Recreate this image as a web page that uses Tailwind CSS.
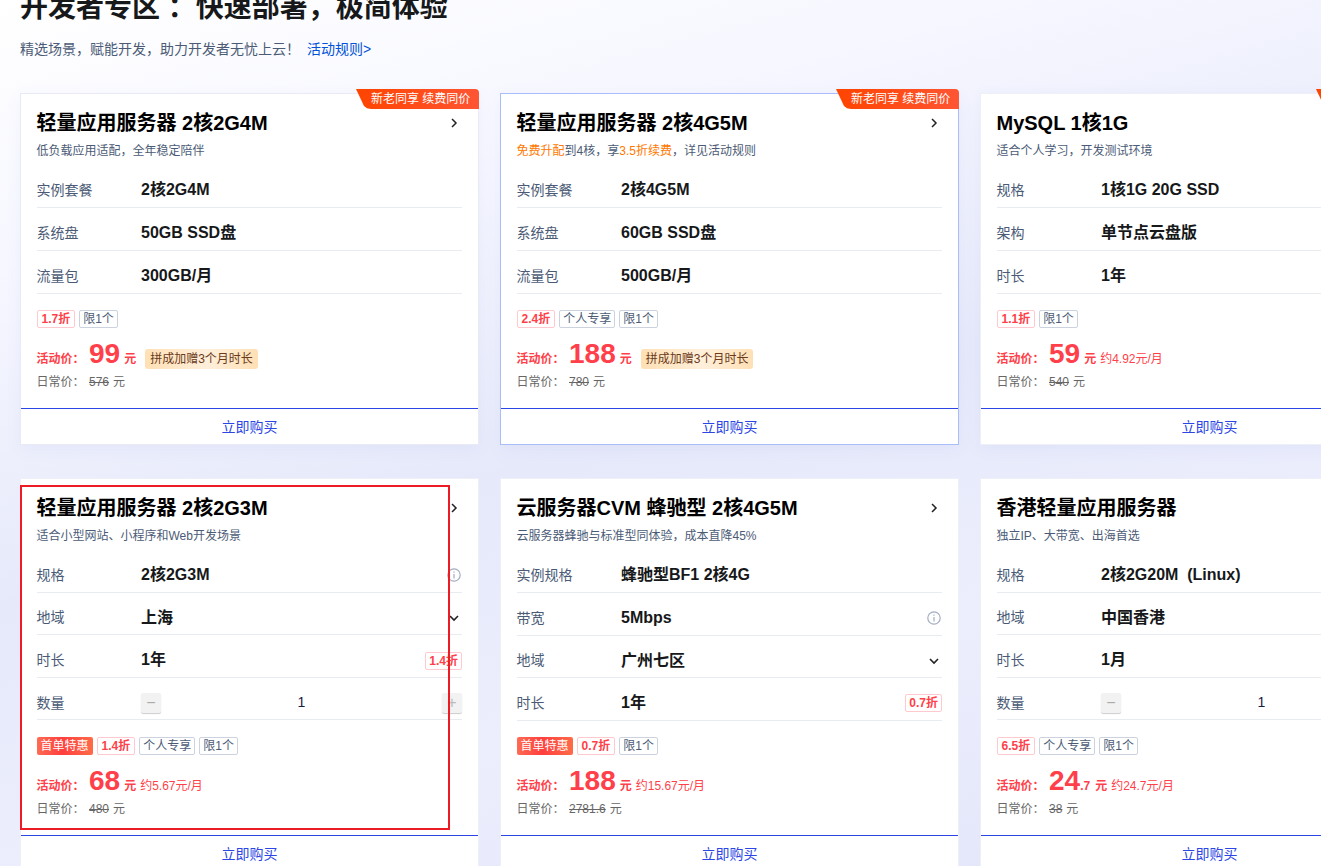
<!DOCTYPE html>
<html lang="zh">
<head>
<meta charset="utf-8">
<script src="https://cdn.jsdelivr.net/npm/@tailwindcss/browser@4"></script>
</head>
<body class="overflow-hidden">
<div class="relative w-[1321px] h-[866px] overflow-hidden pl-[20px] font-['Liberation_Sans','Noto_Sans_CJK_SC',sans-serif] bg-[linear-gradient(165deg,#ffffff_0%,#f6f7ff_22%,#e6e9fa_50%,#eceefd_72%,#e2e5f9_100%)]">
  <h1 class="-mt-[12px] h-[40px] text-[28px] leading-[40px] font-bold text-[#16181a] whitespace-pre">开发者专区 ：快速部署，极简体验</h1>
  <p class="mt-[11px] h-[20px] text-[14px] leading-[20px] text-[#4b5b76]">精选场景，赋能开发，助力开发者无忧上云！<a class="ml-[7px] text-[#0052d9]">活动规则&gt;</a></p>
  <div class="mt-[34px] grid grid-cols-[459px_459px_459px] gap-x-[21px] gap-y-[33px]">

    <!-- Card 1 -->
    <section class="relative flex h-[352px] flex-col border border-[#e8ebf5] bg-white shadow-[0_4px_16px_rgba(80,100,200,0.06)]">
      <div class="absolute right-[-1px] top-[-5px] h-[20px] w-[123px] rounded-tr-[4px] bg-[linear-gradient(90deg,#ff4400,#ff5533)] pl-[15px] text-[12px] leading-[20px] text-white [clip-path:polygon(0_0,100%_0,100%_100%,15px_100%,11px_96%,8px_85%)]">新老同享 续费同价</div>
      <div class="flex-1 pl-[15.5px] pr-[16px] pt-[15px]">
        <div class="flex h-[28px] items-center justify-between">
          <h2 class="text-[20px] leading-[28px] font-bold text-black">轻量应用服务器 2核2G4M</h2>
          <svg class="mr-[4px]" width="8" height="10" viewBox="0 0 8 10" fill="none" stroke="#222" stroke-width="1.5"><path d="M2 1l4 4-4 4"/></svg>
        </div>
        <p class="mt-[4px] h-[20px] text-[12px] leading-[20px] text-[#4b5b76]">低负载应用适配，全年稳定陪伴</p>
        <div class="mt-[4px] flex h-[43px] items-center border-b border-[#e8ebf0] pt-[8px]"><span class="w-[104.5px] text-[14px] text-[#4b5b76]">实例套餐</span><span class="text-[16px] font-bold text-[#16181a]">2核2G4M</span></div>
        <div class="flex h-[43px] items-center border-b border-[#e8ebf0] pt-[8px]"><span class="w-[104.5px] text-[14px] text-[#4b5b76]">系统盘</span><span class="text-[16px] font-bold text-[#16181a]">50GB SSD盘</span></div>
        <div class="flex h-[43px] items-center border-b border-[#e8ebf0] pt-[8px]"><span class="w-[104.5px] text-[14px] text-[#4b5b76]">流量包</span><span class="text-[16px] font-bold text-[#16181a]">300GB/月</span></div>
        <div class="mt-[16px] flex h-[18px] gap-[4px] text-[12px] leading-[16px]"><span class="rounded-[2px] border border-[#ffc9cf] px-[4px] font-bold text-[#ff3f4a]">1.7折</span><span class="rounded-[2px] border border-[#ccd3de] px-[3px] text-[#4b5b76]">限1个</span></div>
        <div class="mt-[8px] flex h-[36px] items-baseline text-[12px] font-bold text-[#ff3f4a]"><span class="w-[52.5px]">活动价：</span><span class="text-[28px] leading-[36px]">99</span><span class="ml-[4px]">元</span><span class="ml-[9px] h-[20px] rounded-[3px] bg-[linear-gradient(90deg,#ffe0b5,#ffefdb_55%,#ffe0b5)] px-[5px] text-[12px] leading-[20px] font-normal text-[#6b3a1a]">拼成加赠3个月时长</span></div>
        <div class="flex h-[20px] items-center text-[12px] text-[#666]"><span class="w-[52.5px]">日常价：</span><s>576</s><span class="ml-[4px]">元</span></div>
      </div>
      <button class="h-[36px] shrink-0 border-t border-[#2b46e5] pt-[2px] text-[14px] text-[#2b46e5]">立即购买</button>
    </section>

    <!-- Card 2 -->
    <section class="relative flex h-[352px] flex-col border border-[#a9bdfb] bg-white shadow-[0_4px_16px_rgba(80,100,200,0.06)]">
      <div class="absolute right-[-1px] top-[-5px] h-[20px] w-[123px] rounded-tr-[4px] bg-[linear-gradient(90deg,#ff4400,#ff5533)] pl-[15px] text-[12px] leading-[20px] text-white [clip-path:polygon(0_0,100%_0,100%_100%,15px_100%,11px_96%,8px_85%)]">新老同享 续费同价</div>
      <div class="flex-1 pl-[15.5px] pr-[16px] pt-[15px]">
        <div class="flex h-[28px] items-center justify-between">
          <h2 class="text-[20px] leading-[28px] font-bold text-black">轻量应用服务器 2核4G5M</h2>
          <svg class="mr-[4px]" width="8" height="10" viewBox="0 0 8 10" fill="none" stroke="#222" stroke-width="1.5"><path d="M2 1l4 4-4 4"/></svg>
        </div>
        <p class="mt-[4px] h-[20px] text-[12px] leading-[20px] text-[#4b5b76]"><span class="text-[#ff7800]">免费升配</span>到4核，享<span class="text-[#ff7800]">3.5折续费</span>，详见活动规则</p>
        <div class="mt-[4px] flex h-[43px] items-center border-b border-[#e8ebf0] pt-[8px]"><span class="w-[104.5px] text-[14px] text-[#4b5b76]">实例套餐</span><span class="text-[16px] font-bold text-[#16181a]">2核4G5M</span></div>
        <div class="flex h-[43px] items-center border-b border-[#e8ebf0] pt-[8px]"><span class="w-[104.5px] text-[14px] text-[#4b5b76]">系统盘</span><span class="text-[16px] font-bold text-[#16181a]">60GB SSD盘</span></div>
        <div class="flex h-[43px] items-center border-b border-[#e8ebf0] pt-[8px]"><span class="w-[104.5px] text-[14px] text-[#4b5b76]">流量包</span><span class="text-[16px] font-bold text-[#16181a]">500GB/月</span></div>
        <div class="mt-[16px] flex h-[18px] gap-[4px] text-[12px] leading-[16px]"><span class="rounded-[2px] border border-[#ffc9cf] px-[4px] font-bold text-[#ff3f4a]">2.4折</span><span class="rounded-[2px] border border-[#ccd3de] px-[3px] text-[#4b5b76]">个人专享</span><span class="rounded-[2px] border border-[#ccd3de] px-[3px] text-[#4b5b76]">限1个</span></div>
        <div class="mt-[8px] flex h-[36px] items-baseline text-[12px] font-bold text-[#ff3f4a]"><span class="w-[52.5px]">活动价：</span><span class="text-[28px] leading-[36px]">188</span><span class="ml-[4px]">元</span><span class="ml-[9px] h-[20px] rounded-[3px] bg-[linear-gradient(90deg,#ffe0b5,#ffefdb_55%,#ffe0b5)] px-[5px] text-[12px] leading-[20px] font-normal text-[#6b3a1a]">拼成加赠3个月时长</span></div>
        <div class="flex h-[20px] items-center text-[12px] text-[#666]"><span class="w-[52.5px]">日常价：</span><s>780</s><span class="ml-[4px]">元</span></div>
      </div>
      <button class="h-[36px] shrink-0 border-t border-[#2b46e5] pt-[2px] text-[14px] text-[#2b46e5]">立即购买</button>
    </section>

    <!-- Card 3 -->
    <section class="relative flex h-[352px] flex-col border border-[#eef0f8] bg-white shadow-[0_4px_16px_rgba(80,100,200,0.06)]">
      <div class="absolute right-[-1px] top-[-5px] h-[20px] w-[123px] rounded-tr-[4px] bg-[linear-gradient(90deg,#ff4400,#ff5533)] pl-[15px] text-[12px] leading-[20px] text-white [clip-path:polygon(0_0,100%_0,100%_100%,15px_100%,11px_96%,8px_85%)]">新老同享 续费同价</div>
      <div class="flex-1 pl-[15.5px] pr-[16px] pt-[15px]">
        <div class="flex h-[28px] items-center justify-between">
          <h2 class="text-[20px] leading-[28px] font-bold text-black">MySQL 1核1G</h2>
          <svg class="mr-[4px]" width="8" height="10" viewBox="0 0 8 10" fill="none" stroke="#222" stroke-width="1.5"><path d="M2 1l4 4-4 4"/></svg>
        </div>
        <p class="mt-[4px] h-[20px] text-[12px] leading-[20px] text-[#4b5b76]">适合个人学习，开发测试环境</p>
        <div class="mt-[4px] flex h-[43px] items-center border-b border-[#e8ebf0] pt-[8px]"><span class="w-[104.5px] text-[14px] text-[#4b5b76]">规格</span><span class="text-[16px] font-bold text-[#16181a]">1核1G 20G SSD</span></div>
        <div class="flex h-[43px] items-center border-b border-[#e8ebf0] pt-[8px]"><span class="w-[104.5px] text-[14px] text-[#4b5b76]">架构</span><span class="text-[16px] font-bold text-[#16181a]">单节点云盘版</span></div>
        <div class="flex h-[43px] items-center border-b border-[#e8ebf0] pt-[8px]"><span class="w-[104.5px] text-[14px] text-[#4b5b76]">时长</span><span class="text-[16px] font-bold text-[#16181a]">1年</span></div>
        <div class="mt-[16px] flex h-[18px] gap-[4px] text-[12px] leading-[16px]"><span class="rounded-[2px] border border-[#ffc9cf] px-[4px] font-bold text-[#ff3f4a]">1.1折</span><span class="rounded-[2px] border border-[#ccd3de] px-[3px] text-[#4b5b76]">限1个</span></div>
        <div class="mt-[8px] flex h-[36px] items-baseline text-[12px] font-bold text-[#ff3f4a]"><span class="w-[52.5px]">活动价：</span><span class="text-[28px] leading-[36px]">59</span><span class="ml-[4px]">元</span><span class="ml-[4px] font-normal">约4.92元/月</span></div>
        <div class="flex h-[20px] items-center text-[12px] text-[#666]"><span class="w-[52.5px]">日常价：</span><s>540</s><span class="ml-[4px]">元</span></div>
      </div>
      <button class="h-[36px] shrink-0 border-t border-[#2b46e5] pt-[2px] text-[14px] text-[#2b46e5]">立即购买</button>
    </section>

    <!-- Card 4 -->
    <section class="relative flex h-[394px] flex-col border border-[#eef0f8] bg-white">
      <div class="flex-1 pl-[15.5px] pr-[16px] pt-[15px]">
        <div class="flex h-[28px] items-center justify-between">
          <h2 class="text-[20px] leading-[28px] font-bold text-black">轻量应用服务器 2核2G3M</h2>
          <svg class="mr-[4px]" width="8" height="10" viewBox="0 0 8 10" fill="none" stroke="#222" stroke-width="1.5"><path d="M2 1l4 4-4 4"/></svg>
        </div>
        <p class="mt-[4px] h-[20px] text-[12px] leading-[20px] text-[#4b5b76]">适合小型网站、小程序和Web开发场景</p>
        <div class="mt-[4px] flex h-[43px] items-center justify-between border-b border-[#e8ebf0] pt-[8px]"><div class="flex items-center"><span class="w-[104.5px] text-[14px] text-[#4b5b76]">规格</span><span class="text-[16px] font-bold text-[#16181a]">2核2G3M</span></div><svg class="mr-[1px]" width="14" height="14" viewBox="0 0 14 14" fill="none" stroke="#a3adc0" stroke-width="1.2"><circle cx="7" cy="7" r="6.2"/><path d="M7 6v4.5M7 3.4v1.4"/></svg></div>
        <div class="flex h-[42px] items-center justify-between border-b border-[#e8ebf0] pt-[8px]"><div class="flex items-center"><span class="w-[104.5px] text-[14px] text-[#4b5b76]">地域</span><span class="text-[16px] font-bold text-[#16181a]">上海</span></div><svg class="mr-[3px]" width="10" height="8" viewBox="0 0 10 8" fill="none" stroke="#222" stroke-width="1.6"><path d="M1 2l4 4 4-4"/></svg></div>
        <div class="flex h-[43px] items-center justify-between border-b border-[#e8ebf0] pt-[8px]"><div class="flex items-center"><span class="w-[104.5px] text-[14px] text-[#4b5b76]">时长</span><span class="text-[16px] font-bold text-[#16181a]">1年</span></div><span class="mt-[2px] h-[18px] rounded-[2px] border border-[#ffc9cf] px-[3px] text-[12px] leading-[16px] font-bold text-[#ff3f4a]">1.4折</span></div>
        <div class="flex h-[42px] items-center border-b border-[#e8ebf0] pt-[8px]"><span class="mt-[2px] w-[104.5px] text-[14px] text-[#4b5b76]">数量</span><span class="flex h-[20px] w-[20px] items-center justify-center rounded-[2px] bg-[#f2f2f2] text-[16px] leading-none text-[#aaa] shadow-[0_1px_1px_rgba(0,0,0,0.2)]">−</span><span class="flex-1 text-center text-[14px] text-[#16213f]">1</span><span class="flex h-[20px] w-[20px] items-center justify-center rounded-[2px] bg-[#f2f2f2] text-[16px] leading-none text-[#bbb] shadow-[0_1px_1px_rgba(0,0,0,0.2)]">+</span></div>
        <div class="mt-[17px] flex h-[18px] gap-[4px] text-[12px] leading-[16px]"><span class="rounded-[2px] bg-[linear-gradient(90deg,#ff6b52,#ff3f3f_45%,#ff6b47)] px-[4px] leading-[18px] text-white">首单特惠</span><span class="rounded-[2px] border border-[#ffc9cf] px-[4px] font-bold text-[#ff3f4a]">1.4折</span><span class="rounded-[2px] border border-[#ccd3de] px-[3px] text-[#4b5b76]">个人专享</span><span class="rounded-[2px] border border-[#ccd3de] px-[3px] text-[#4b5b76]">限1个</span></div>
        <div class="mt-[8px] flex h-[36px] items-baseline text-[12px] font-bold text-[#ff3f4a]"><span class="w-[52.5px]">活动价：</span><span class="text-[28px] leading-[36px]">68</span><span class="ml-[4px]">元</span><span class="ml-[4px] font-normal">约5.67元/月</span></div>
        <div class="flex h-[20px] items-center text-[12px] text-[#666]"><span class="w-[52.5px]">日常价：</span><s>480</s><span class="ml-[4px]">元</span></div>
      </div>
      <button class="h-[36px] shrink-0 border-t border-[#2b46e5] pt-[2px] text-[14px] text-[#2b46e5]">立即购买</button>
    </section>

    <!-- Card 5 -->
    <section class="relative flex h-[394px] flex-col border border-[#eef0f8] bg-white">
      <div class="flex-1 pl-[15.5px] pr-[16px] pt-[15px]">
        <div class="flex h-[28px] items-center justify-between">
          <h2 class="text-[20px] leading-[28px] font-bold text-black">云服务器CVM 蜂驰型 2核4G5M</h2>
          <svg class="mr-[4px]" width="8" height="10" viewBox="0 0 8 10" fill="none" stroke="#222" stroke-width="1.5"><path d="M2 1l4 4-4 4"/></svg>
        </div>
        <p class="mt-[4px] h-[20px] text-[12px] leading-[20px] text-[#4b5b76]">云服务器蜂驰与标准型同体验，成本直降45%</p>
        <div class="mt-[4px] flex h-[43px] items-center border-b border-[#e8ebf0] pt-[8px]"><span class="w-[104.5px] text-[14px] text-[#4b5b76]">实例规格</span><span class="text-[16px] font-bold text-[#16181a]">蜂驰型BF1 2核4G</span></div>
        <div class="flex h-[43px] items-center justify-between border-b border-[#e8ebf0] pt-[8px]"><div class="flex items-center"><span class="w-[104.5px] text-[14px] text-[#4b5b76]">带宽</span><span class="text-[16px] font-bold text-[#16181a]">5Mbps</span></div><svg class="mr-[1px]" width="14" height="14" viewBox="0 0 14 14" fill="none" stroke="#a3adc0" stroke-width="1.2"><circle cx="7" cy="7" r="6.2"/><path d="M7 6v4.5M7 3.4v1.4"/></svg></div>
        <div class="flex h-[42px] items-center justify-between border-b border-[#e8ebf0] pt-[8px]"><div class="flex items-center"><span class="w-[104.5px] text-[14px] text-[#4b5b76]">地域</span><span class="text-[16px] font-bold text-[#16181a]">广州七区</span></div><svg class="mr-[3px]" width="10" height="8" viewBox="0 0 10 8" fill="none" stroke="#222" stroke-width="1.6"><path d="M1 2l4 4 4-4"/></svg></div>
        <div class="flex h-[43px] items-center justify-between border-b border-[#e8ebf0] pt-[8px]"><div class="flex items-center"><span class="w-[104.5px] text-[14px] text-[#4b5b76]">时长</span><span class="text-[16px] font-bold text-[#16181a]">1年</span></div><span class="h-[18px] rounded-[2px] border border-[#ffc9cf] px-[3px] text-[12px] leading-[16px] font-bold text-[#ff3f4a]">0.7折</span></div>
        <div class="mt-[16px] flex h-[18px] gap-[4px] text-[12px] leading-[16px]"><span class="rounded-[2px] bg-[linear-gradient(90deg,#ff6b52,#ff3f3f_45%,#ff6b47)] px-[4px] leading-[18px] text-white">首单特惠</span><span class="rounded-[2px] border border-[#ffc9cf] px-[4px] font-bold text-[#ff3f4a]">0.7折</span><span class="rounded-[2px] border border-[#ccd3de] px-[3px] text-[#4b5b76]">限1个</span></div>
        <div class="mt-[8px] flex h-[36px] items-baseline text-[12px] font-bold text-[#ff3f4a]"><span class="w-[52.5px]">活动价：</span><span class="text-[28px] leading-[36px]">188</span><span class="ml-[4px]">元</span><span class="ml-[4px] font-normal">约15.67元/月</span></div>
        <div class="flex h-[20px] items-center text-[12px] text-[#666]"><span class="w-[52.5px]">日常价：</span><s>2781.6</s><span class="ml-[4px]">元</span></div>
      </div>
      <button class="h-[36px] shrink-0 border-t border-[#2b46e5] pt-[2px] text-[14px] text-[#2b46e5]">立即购买</button>
    </section>

    <!-- Card 6 -->
    <section class="relative flex h-[394px] flex-col border border-[#eef0f8] bg-white">
      <div class="flex-1 pl-[15.5px] pr-[16px] pt-[15px]">
        <div class="flex h-[28px] items-center justify-between">
          <h2 class="text-[20px] leading-[28px] font-bold text-black">香港轻量应用服务器</h2>
          <svg class="mr-[4px]" width="8" height="10" viewBox="0 0 8 10" fill="none" stroke="#222" stroke-width="1.5"><path d="M2 1l4 4-4 4"/></svg>
        </div>
        <p class="mt-[4px] h-[20px] text-[12px] leading-[20px] text-[#4b5b76]">独立IP、大带宽、出海首选</p>
        <div class="mt-[4px] flex h-[43px] items-center border-b border-[#e8ebf0] pt-[8px]"><span class="w-[104.5px] text-[14px] text-[#4b5b76]">规格</span><span class="whitespace-pre text-[16px] font-bold text-[#16181a]">2核2G20M  (Linux)</span></div>
        <div class="flex h-[42px] items-center border-b border-[#e8ebf0] pt-[8px]"><span class="w-[104.5px] text-[14px] text-[#4b5b76]">地域</span><span class="text-[16px] font-bold text-[#16181a]">中国香港</span></div>
        <div class="flex h-[43px] items-center border-b border-[#e8ebf0] pt-[8px]"><span class="w-[104.5px] text-[14px] text-[#4b5b76]">时长</span><span class="text-[16px] font-bold text-[#16181a]">1月</span></div>
        <div class="flex h-[42px] items-center border-b border-[#e8ebf0] pt-[8px]"><span class="mt-[2px] w-[104.5px] text-[14px] text-[#4b5b76]">数量</span><span class="flex h-[20px] w-[20px] items-center justify-center rounded-[2px] bg-[#f2f2f2] text-[16px] leading-none text-[#aaa] shadow-[0_1px_1px_rgba(0,0,0,0.2)]">−</span><span class="flex-1 text-center text-[14px] text-[#16213f]">1</span><span class="flex h-[20px] w-[20px] items-center justify-center rounded-[2px] bg-[#f2f2f2] text-[16px] leading-none text-[#bbb] shadow-[0_1px_1px_rgba(0,0,0,0.2)]">+</span></div>
        <div class="mt-[17px] flex h-[18px] gap-[4px] text-[12px] leading-[16px]"><span class="rounded-[2px] border border-[#ffc9cf] px-[4px] font-bold text-[#ff3f4a]">6.5折</span><span class="rounded-[2px] border border-[#ccd3de] px-[3px] text-[#4b5b76]">个人专享</span><span class="rounded-[2px] border border-[#ccd3de] px-[3px] text-[#4b5b76]">限1个</span></div>
        <div class="mt-[8px] flex h-[36px] items-baseline text-[12px] font-bold text-[#ff3f4a]"><span class="w-[52.5px]">活动价：</span><span class="text-[28px] leading-[36px]">24</span><span>.7</span><span class="ml-[5px]">元</span><span class="ml-[4px] font-normal">约24.7元/月</span></div>
        <div class="flex h-[20px] items-center text-[12px] text-[#666]"><span class="w-[52.5px]">日常价：</span><s>38</s><span class="ml-[4px]">元</span></div>
      </div>
      <button class="h-[36px] shrink-0 border-t border-[#2b46e5] pt-[2px] text-[14px] text-[#2b46e5]">立即购买</button>
    </section>
  </div>
  <div class="pointer-events-none absolute left-[20px] top-[485px] h-[345px] w-[430px] border-2 border-[#ed1c24]"></div>
</div>
</body>
</html>
